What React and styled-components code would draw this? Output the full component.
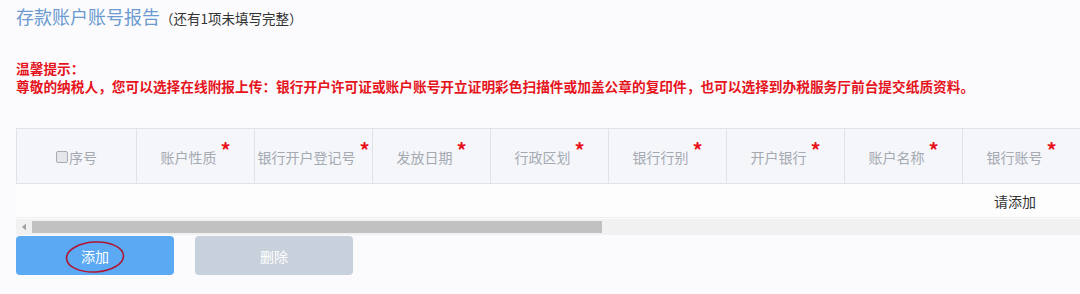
import React from "react";
import styled, { createGlobalStyle } from "styled-components";

const Global = createGlobalStyle`
  html, body { margin: 0; padding: 0; background: #fbfbfd; }
  body { font-family: "Noto Sans CJK SC", "Noto Sans", sans-serif; }
  * { box-sizing: border-box; }
`;

const Page = styled.div`
  width: 1080px;
  height: 294px;
  overflow: hidden;
  padding: 4px 0 0 16px;
  background: #fbfbfd;
`;

const TitleRow = styled.div`
  display: flex;
  align-items: baseline;
  height: 24px;
`;

const Title = styled.span`
  font-size: 18px;
  line-height: 24px;
  color: #6b9ad0;
`;

const Sub = styled.span`
  font-size: 13.5px;
  color: #333;
`;

const Notice = styled.div`
  margin-top: 31px;
  color: #e5141c;
  font-size: 13.7px;
  line-height: 18px;
  font-weight: 700;
  white-space: nowrap;
`;

const TableWrap = styled.div`
  margin-top: 33px;
  width: 1064px;
  overflow: hidden;
`;

const Grid = styled.div`
  display: grid;
  grid-template-columns: 120px repeat(9, 118px);
  width: max-content;
`;

const HeadCell = styled.div`
  height: 56px;
  background: #f4f6fa;
  border-top: 1px solid #dfe2e7;
  border-bottom: 1px solid #dfe2e7;
  border-left: 1px solid #dfe2e7;
  display: flex;
  align-items: center;
  justify-content: center;
  padding-top: 2px;
  color: #a5a9b1;
  font-size: 14px;
  white-space: nowrap;
`;

const Star = styled.span`
  color: #e8101a;
  font-weight: 700;
  font-size: 20px;
  line-height: 1;
  margin-left: 4px;
  position: relative;
  top: -7px;
`;

const Check = styled.span`
  display: inline-block;
  width: 12px;
  height: 12px;
  border: 1px solid #a9acb2;
  border-radius: 2px;
  background: #e4e6ea;
  margin-right: 1px;
`;

const BodyCell = styled.div`
  height: 34px;
  background: #fdfdfe;
  border-bottom: 1px solid #eef0f3;
  display: flex;
  align-items: center;
  justify-content: center;
  padding-right: ${(p) => (p.$shift ? "12px" : "0")};
  font-size: 14px;
  color: #333;
  white-space: nowrap;
`;

const ScrollTrack = styled.div`
  margin-top: 1px;
  height: 16px;
  background: #f1f1f1;
  display: flex;
  align-items: center;
`;

const ScrollArrow = styled.div`
  width: 16px;
  height: 16px;
  display: flex;
  align-items: center;
  justify-content: center;
`;

const Thumb = styled.div`
  width: 570px;
  height: 12px;
  background: #c1c1c1;
`;

const Buttons = styled.div`
  display: flex;
  gap: 21px;
  margin-top: 1px;
`;

const Btn = styled.div`
  position: relative;
  width: 158px;
  height: 39px;
  border-radius: 4px;
  background: ${(p) => (p.$primary ? "#5ba8f3" : "#c8d1db")};
  color: #fff;
  font-size: 14px;
  display: flex;
  align-items: center;
  justify-content: center;
`;

const Annot = styled.svg`
  position: absolute;
  left: 49px;
  top: 5px;
  overflow: visible;
`;

const cols = ["账户性质", "银行开户登记号", "发放日期", "行政区划", "银行行别", "开户银行", "账户名称", "银行账号"];

export default function App() {
  return (
    <>
      <Global />
      <Page>
        <TitleRow>
          <Title>存款账户账号报告</Title>
          <Sub>（还有1项未填写完整）</Sub>
        </TitleRow>
        <Notice>
          <div>温馨提示：</div>
          <div>尊敬的纳税人，您可以选择在线附报上传：银行开户许可证或账户账号开立证明彩色扫描件或加盖公章的复印件，也可以选择到办税服务厅前台提交纸质资料。</div>
        </Notice>
        <TableWrap>
          <Grid>
            <HeadCell>
              <Check />序号
            </HeadCell>
            {cols.map((c) => (
              <HeadCell key={c}>
                {c}
                <Star>*</Star>
              </HeadCell>
            ))}
            <HeadCell />
            {Array.from({ length: 10 }).map((_, i) => (
              <BodyCell key={i} $shift={i === 8}>
                {i === 8 ? "请添加" : ""}
              </BodyCell>
            ))}
          </Grid>
          <ScrollTrack>
            <ScrollArrow>
              <svg width="6" height="8" viewBox="0 0 6 8">
                <path d="M5 0.5 L1 4 L5 7.5 Z" fill="#a3a3a3" />
              </svg>
            </ScrollArrow>
            <Thumb />
          </ScrollTrack>
        </TableWrap>
        <Buttons>
          <Btn $primary>
            添加
            <Annot width="60" height="32" viewBox="0 0 60 32">
              <ellipse cx="30" cy="16" rx="28.5" ry="15" fill="none" stroke="#b01430" strokeWidth="1.6" transform="rotate(-3 30 16)" />
            </Annot>
          </Btn>
          <Btn>删除</Btn>
        </Buttons>
      </Page>
    </>
  );
}
